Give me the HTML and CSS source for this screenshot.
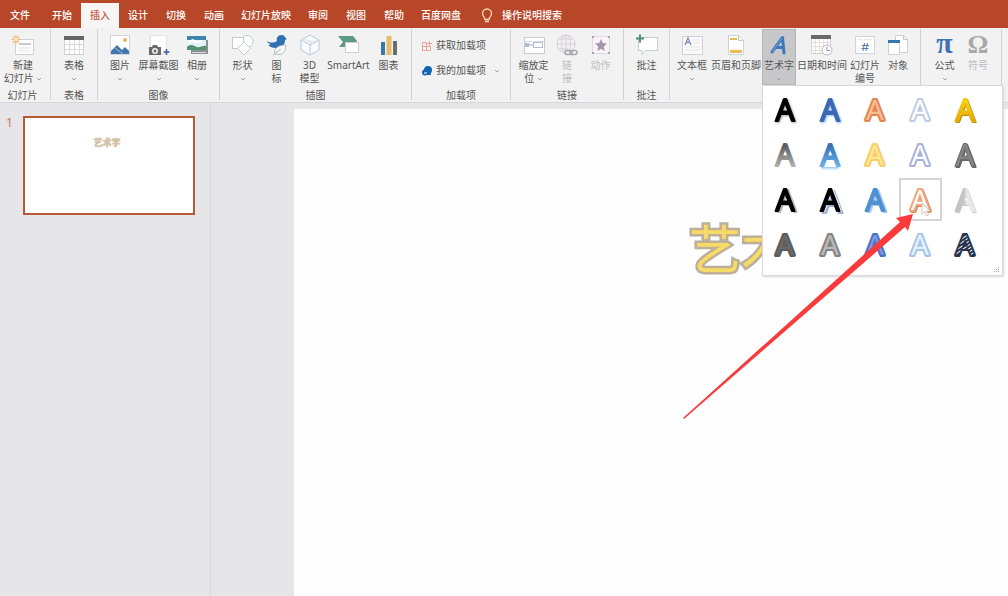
FILE: index.html
```html
<!DOCTYPE html>
<html lang="zh-CN">
<head>
<meta charset="utf-8">
<title>演示文稿</title>
<link rel="stylesheet" href="styles.css">
</head>
<body>
<svg class="defs" aria-hidden="true">
  <defs>
    <linearGradient id="grey" x2="0" y2="1"><stop offset=".3" stop-color="#5f5f5f"/><stop offset=".8" stop-color="#b5b5b5"/></linearGradient>
    <linearGradient id="blue" x2="0" y2="1"><stop offset=".3" stop-color="#3974ba"/><stop offset=".8" stop-color="#6fb1ea"/></linearGradient>
    <linearGradient id="gold" x2="0" y2="1"><stop offset=".3" stop-color="#f6cf10"/><stop offset=".8" stop-color="#e3a90c"/></linearGradient>
    <linearGradient id="silver"><stop offset=".4" stop-color="#c4c4c4"/><stop offset=".6" stop-color="#e9e9e9"/></linearGradient>
    <linearGradient id="fade" x2="0" y2="1"><stop offset="0" stop-color="#8fc3ea"/><stop offset=".8" stop-color="#fff" stop-opacity="0"/></linearGradient>
    <pattern id="hatch" width="3" height="3" patternUnits="userSpaceOnUse" patternTransform="rotate(-35)"><path d="M0 0h3v3H0z" fill="#fff"/><path d="M0 0h3v2H0z" fill="#26344f"/></pattern>
  </defs>
</svg>
<div class="app">
  <nav class="tabs">
    <button class="tab file">文件</button>
    <button class="tab">开始</button>
    <button class="tab active">插入</button>
    <button class="tab">设计</button>
    <button class="tab">切换</button>
    <button class="tab">动画</button>
    <button class="tab wide">幻灯片放映</button>
    <button class="tab">审阅</button>
    <button class="tab">视图</button>
    <button class="tab">帮助</button>
    <button class="tab wide">百度网盘</button>
    <button class="tell">
      <svg width="12" height="16" viewBox="0 0 12 16" fill="none" stroke="#ffd9b8" stroke-width="1.3"><path d="M4 11.500C4 9 1.500 8.500 1.500 5.500a4.500 4.500 0 0 1 9 0C10.500 8.500 8 9 8 11.500zM4 13.500h4"/></svg>
      操作说明搜索
    </button>
  </nav>

  <div class="ribbon">
    <section class="group g-slide">
      <div class="tools">
        <button class="tool w42">
          <svg class="icon" viewBox="0 0 24 22"><rect x="4.500" y="5.500" width="18" height="15" fill="#fff" stroke="#cfcfd4"/><path d="M8 9h12v2H8z" fill="#c6c8ce"/><path d="M8 14h12M8 17h12" stroke="#dddfe3"/><path d="M5 1v9M0.500 5.500h9M2 2.500l6 6M8 2.500l-6 6" stroke="#f0b56c" stroke-width="1.200"/><circle cx="5" cy="5.500" r="2" fill="#fbe3bd"/></svg>
          <span>新建</span><span>幻灯片 <svg class="caret" viewBox="0 0 6 4"><path d="M1 1l2 2 2-2"/></svg></span>
        </button>
      </div>
      <div class="label">幻灯片</div>
    </section>

    <section class="group g-table">
      <div class="tools">
        <button class="tool w34">
          <svg class="icon" viewBox="0 0 24 22"><rect x="2.500" y="2.500" width="19" height="18" fill="#fff" stroke="#cfcfcf"/><path d="M2 2h20v4H2z" fill="#666"/><path d="M7.500 6v14M12.500 6v14M17.500 6v14M2 10.500h20M2 15.500h20" stroke="#dadada"/></svg>
          <span>表格</span><span><svg class="caret" viewBox="0 0 6 4"><path d="M1 1l2 2 2-2"/></svg></span>
        </button>
      </div>
      <div class="label">表格</div>
    </section>

    <section class="group g-image">
      <div class="tools">
        <button class="tool w36">
          <svg class="icon" viewBox="0 0 24 22"><rect x="2.500" y="1.500" width="19" height="19" fill="#fff" stroke="#d3d5d8"/><path d="M3 20v-3l6-6 5 5 3-3 4 4v3z" fill="#3f76ae"/><path d="M7 14l8 6" stroke="#9fbfdd"/><circle cx="17" cy="6" r="2" fill="#efb35e"/></svg>
          <span>图片</span><span><svg class="caret" viewBox="0 0 6 4"><path d="M1 1l2 2 2-2"/></svg></span>
        </button>
        <button class="tool w41">
          <svg class="icon" viewBox="0 0 24 22"><rect x="3.500" y="1.500" width="16" height="18" fill="#fff" stroke="#e2e2e2"/><path d="M2 13h3l1-2h4l1 2h3v8H2z" fill="#6b6b6b"/><circle cx="8" cy="17" r="3" fill="#f1f1f1"/><circle cx="8" cy="17" r="1.500" fill="#6b6b6b"/><path d="M19.500 15v6M16.500 18h6" stroke="#3c5fa8" stroke-width="1.500"/></svg>
          <span>屏幕截图</span><span><svg class="caret" viewBox="0 0 6 4"><path d="M1 1l2 2 2-2"/></svg></span>
        </button>
        <button class="tool w36">
          <svg class="icon" viewBox="0 0 24 22"><rect x="6" y="6" width="17" height="14" fill="#8b9097"/><path d="M2 2h19v14H2z" fill="#e4f1f6"/><path d="M2 2h19v4H2z" fill="#3d86ab"/><path d="M2 15v-2c4-4 7-1 10 0s6-2 9-1v4H2z" fill="#55906f"/><path d="M3 8l5-2 3 2 6-1" stroke="#fff" stroke-width="2" fill="none"/><path d="M7 18.500h14" stroke="#d9dbe0"/></svg>
          <span>相册</span><span><svg class="caret" viewBox="0 0 6 4"><path d="M1 1l2 2 2-2"/></svg></span>
        </button>
      </div>
      <div class="label">图像</div>
    </section>

    <section class="group g-illus">
      <div class="tools">
        <button class="tool w34">
          <svg class="icon" viewBox="0 0 24 22" fill="#fff" stroke="#c7cad6"><circle cx="16" cy="7.500" r="6"/><rect x="1.500" y="3.500" width="11" height="11"/><path d="M13 8l6.500 6.500L13 21l-6.500-6.500z"/></svg>
          <span>形状</span><span><svg class="caret" viewBox="0 0 6 4"><path d="M1 1l2 2 2-2"/></svg></span>
        </button>
        <button class="tool w34">
          <svg class="icon" viewBox="0 0 24 22"><path d="M2 7c3 2 7 2 10 0-1-3 1-6 4.500-6 2 0 3.500 1 4 3l1.500 1-2 1c0 4-2 6-5 7-4 2-9 1-12-2 1 0 2 0 2-1-2-1-3-2-3-3z" fill="#2f6fb3"/><path d="M10 20c-2-5 3-9 11-9 0 7-4 11-10 9zM16 15l-8 6" fill="#f7f7f7" stroke="#b4b9be"/></svg>
          <span>图</span><span>标</span>
        </button>
        <button class="tool w32">
          <svg class="icon" viewBox="0 0 24 22" fill="#fbfdff" stroke="#b3c8e3" stroke-linejoin="round"><path d="M12 1l9 5v10l-9 5-9-5V6zM3 6l9 5 9-5M12 11v10"/><path d="M6 4.500l9 5" stroke="#d4e1f1"/></svg>
          <span>3D</span><span>模型</span>
        </button>
        <button class="tool w46">
          <svg class="icon" viewBox="0 0 24 22"><path d="M1 2h15l4 5-2 3H9v3H2l4-5z" fill="#5c9a82"/><rect x="8.500" y="8.500" width="13" height="10" fill="#fff" stroke="#cdcdd3"/></svg>
          <span>SmartArt</span>
        </button>
        <button class="tool w34">
          <svg class="icon" viewBox="0 0 24 22"><path d="M4 8h4v13H4z" fill="#3a75b0"/><path d="M9.500 2h5v19h-5z" fill="#e9bd68"/><path d="M16 7h4v14h-4z" fill="#6a7072"/></svg>
          <span>图表</span>
        </button>
      </div>
      <div class="label">插图</div>
    </section>

    <section class="group g-addin">
      <div class="rows">
        <button class="row">
          <svg width="10" height="10" viewBox="0 0 10 10" fill="none" stroke="#eda29c"><path d="M.5 1.500h4v8h-4zM.5 5.500h8v4h-8M7.500 0v5M5 2.500h5"/></svg>
          获取加载项
        </button>
        <button class="row">
          <svg width="10" height="10" viewBox="0 0 10 10" fill="#1464b4"><circle cx="6" cy="4" r="4"/><circle cx="3" cy="6.500" r="3"/><path d="M4 9l4-4 1 4z"/><path d="M2 7h3" stroke="#fff"/></svg>
          <span class="grow">我的加载项</span>
          <svg class="caret" viewBox="0 0 6 4"><path d="M1 1l2 2 2-2"/></svg>
        </button>
      </div>
      <div class="label">加载项</div>
    </section>

    <section class="group g-link">
      <div class="tools">
        <button class="tool w34">
          <svg class="icon" viewBox="0 0 24 22"><rect x="2.500" y="3.500" width="20" height="16" fill="#fff" stroke="#c9c9d2"/><path d="M2 7.500h20" stroke="#dddbe8"/><rect x="11.500" y="8.500" width="9" height="5" fill="#fff" stroke="#b4bdd6"/><path d="M3 9h4v4H3z" fill="#b1bbdc"/><path d="M6 11h5" stroke="#9dabd3"/></svg>
          <span>缩放定</span><span>位 <svg class="caret" viewBox="0 0 6 4"><path d="M1 1l2 2 2-2"/></svg></span>
        </button>
        <button class="tool w33" disabled>
          <svg class="icon" viewBox="0 0 24 22" fill="none" stroke="#d6ced9"><circle cx="11" cy="10" r="9"/><ellipse cx="11" cy="10" rx="4.500" ry="9"/><path d="M2 10h18M4 5h14M4 15h9M11 1v18"/><g stroke="#a5a5aa" stroke-width="1.500"><rect x="10" y="16.500" width="7" height="4" rx="2" fill="#f2f2f2"/><rect x="15" y="16.500" width="7" height="4" rx="2"/></g></svg>
          <span>链</span><span>接</span>
        </button>
        <button class="tool w34" disabled>
          <svg class="icon" viewBox="0 0 24 22"><rect x="3.500" y="2.500" width="17" height="17" fill="#f8f4f8" stroke="#e0d8e2"/><path d="M12 5l1.800 4 4.200.5-3.200 3 .9 4.500-3.700-2.300L8.300 17l.9-4.500-3.200-3 4.200-.5z" fill="#a596ac"/><path d="M3 2h2v2H3zM19 2h2v2h-2zM3 18h2v2H3zM19 18h2v2h-2z" fill="#a99fb0"/></svg>
          <span>动作</span>
        </button>
      </div>
      <div class="label">链接</div>
    </section>

    <section class="group g-note">
      <div class="tools">
        <button class="tool w34">
          <svg class="icon" viewBox="0 0 24 22"><path d="M3.500 3.500h19v13H11l-4 4v-4H3.500z" fill="#fff" stroke="#c8cccb"/><path d="M5 .5v8M1 4.500h8" stroke="#4f917a" stroke-width="2"/></svg>
          <span>批注</span>
        </button>
      </div>
      <div class="label">批注</div>
    </section>

    <section class="group g-text">
      <div class="tools">
        <button class="tool w36">
          <svg class="icon" viewBox="0 0 24 22"><rect x="2.500" y="2.500" width="20" height="18" fill="#fafafc" stroke="#cfcfd4"/><path d="M5 11l3-7 3 7M6 8.500h4" fill="none" stroke="#7d8dc2" stroke-width="1.300"/><path d="M13 6h7M13 9h7M5 13h15M5 16h15" stroke="#e6e6ec"/></svg>
          <span>文本框</span><span><svg class="caret" viewBox="0 0 6 4"><path d="M1 1l2 2 2-2"/></svg></span>
        </button>
        <button class="tool w52">
          <svg class="icon" viewBox="0 0 24 22"><path d="M4.500 1.500h10l5 5v14h-15z" fill="#fff" stroke="#d2d2d2"/><path d="M14.500 1.500v5h5" fill="none" stroke="#c7c7c7"/><path d="M6 4h7v2H6zM6 16h12v3H6z" fill="#e7bd5c"/></svg>
          <span>页眉和页脚</span>
        </button>
        <div class="menu-anchor">
          <button class="tool w34 open" aria-expanded="true">
            <svg class="icon" viewBox="0 0 24 22"><path d="M5 18L15.500 3.500 17 19M8 13.500h8.500" fill="none" stroke="#3c77bd" stroke-width="3" stroke-linejoin="round" stroke-linecap="round"/><path d="M5.500 17.500L15 4" stroke="#7aa6dc"/></svg>
            <span>艺术字</span><span><svg class="caret" viewBox="0 0 6 4"><path d="M1 1l2 2 2-2"/></svg></span>
          </button>
          <div class="gallery">
            <button class="art"><svg class="a1"><text x="19" y="31">A</text></svg></button>
            <button class="art"><svg class="a2"><text x="19" y="31">A</text></svg></button>
            <button class="art thick"><svg class="a3"><text x="19" y="30">A</text></svg></button>
            <button class="art thick"><svg class="a4"><text x="19" y="30">A</text></svg></button>
            <button class="art"><svg class="a5"><text x="19" y="31">A</text></svg></button>

            <button class="art"><svg class="a6"><text x="19" y="31">A</text></svg></button>
            <button class="art"><svg class="a7"><path d="M10 32h18l-2 6H12z" fill="url(#fade)"/><text x="19" y="31">A</text></svg></button>
            <button class="art thick"><svg class="a8"><text x="19" y="30">A</text></svg></button>
            <button class="art thick"><svg class="a9"><text x="19" y="30">A</text></svg></button>
            <button class="art"><svg class="a10"><text x="19" y="31">A</text></svg></button>

            <button class="art"><svg class="a11"><text x="19" y="31">A</text></svg></button>
            <button class="art"><svg class="a12"><text x="19" y="31">A</text></svg></button>
            <button class="art"><svg class="a13"><text x="19" y="31">A</text></svg></button>
            <button class="art thick chosen"><svg class="a14"><text x="19" y="30">A</text></svg></button>
            <button class="art"><svg class="a15"><text x="19" y="31">A</text></svg></button>

            <button class="art thick"><svg class="a16"><text x="19" y="30">A</text></svg></button>
            <button class="art thick"><svg class="a17"><text x="19" y="30">A</text></svg></button>
            <button class="art thick"><svg class="a18"><text x="19" y="30">A</text></svg></button>
            <button class="art thick"><svg class="a19"><text x="19" y="30">A</text></svg></button>
            <button class="art thick"><svg class="a20"><text x="19" y="30">A</text></svg></button>
            <svg class="pointer" viewBox="0 0 10 15"><path d="M1 1v11l2.500-2.500L5.500 14l2-1-2-4H9z" fill="#fff" stroke="#cfc4c2"/></svg>
            <svg class="grip" viewBox="0 0 6 6" fill="#aaa"><path d="M4 0h1v1H4zM2 2h1v1H2zM4 2h1v1H4zM0 4h1v1H0zM2 4h1v1H2zM4 4h1v1H4z"/></svg>
          </div>
        </div>
        <button class="tool w52">
          <svg class="icon" viewBox="0 0 24 22"><rect x="1.500" y="2.500" width="19" height="17" fill="#fff" stroke="#d4cfcf"/><path d="M1 1h20v4H1z" fill="#696969"/><path d="M5.500 5v14M9.500 5v14M13.500 5v14M17.500 5v14M1 8.500h20M1 12.500h20M1 16.500h20" stroke="#eaddda"/><circle cx="17" cy="16" r="5" fill="#fff" stroke="#b3bfce"/><path d="M17 13v3.500h3" fill="none" stroke="#8c9bb0"/></svg>
          <span>日期和时间</span>
        </button>
        <button class="tool w34">
          <svg class="icon" viewBox="0 0 24 22"><rect x="2.500" y="2.500" width="19" height="17" fill="#fff" stroke="#d1d3da"/><path d="M5 5.500h14" stroke="#e0e0e5" stroke-dasharray="2 1"/><path d="M11.500 9L10 17M14.500 9L13 17M9 11.500h7M8.500 14.500h7" stroke="#5b76ad"/></svg>
          <span>幻灯片</span><span>编号</span>
        </button>
        <button class="tool w32">
          <svg class="icon" viewBox="0 0 24 22"><path d="M9.500 1.500h8l4 4v13h-12z" fill="#fff" stroke="#d0d0d0"/><path d="M17.500 1.500v4h4" fill="none" stroke="#c5c5c5"/><rect x="2.500" y="6.500" width="11" height="14" fill="#fff" stroke="#cdd2d8"/><path d="M2 6h12v3H2z" fill="#3377ac"/></svg>
          <span>对象</span>
        </button>
      </div>
    </section>

    <section class="group g-symbol">
      <div class="tools">
        <button class="tool w34">
          <span class="glyph pi">π</span>
          <span>公式</span><span><svg class="caret" viewBox="0 0 6 4"><path d="M1 1l2 2 2-2"/></svg></span>
        </button>
        <button class="tool w33" disabled>
          <span class="glyph">Ω</span>
          <span>符号</span>
        </button>
      </div>
    </section>
  </div>

  <main class="work">
    <aside class="thumbs">
      <span class="num">1</span>
      <button class="thumb">艺术字</button>
    </aside>
    <div class="stage">
      <div class="slide"><div class="title">艺术字</div></div>
    </div>
  </main>

  <svg class="arrow" viewBox="0 0 232 206"><path d="M0 204L217 8l-4-4 17-4-5 17-3-4L1 205z" fill="#fb3b3b"/></svg>
</div>
</body>
</html>
```

FILE: styles.css
```css
* { box-sizing: border-box; }

body {
  margin: 0;
  font-family: "Noto Sans", "Noto Sans CJK SC", sans-serif;
  font-size: 10px;
  line-height: 13px;
  color: #555;
}

button {
  margin: 0;
  padding: 0;
  border: 0;
  background: none;
  font: inherit;
  color: inherit;
  white-space: nowrap;
}

.defs { position: absolute; width: 0; height: 0; }

.app {
  position: relative;
  display: flex;
  flex-direction: column;
  min-height: 100vh;
  overflow: hidden;
}

/* Tab strip */
.tabs {
  display: flex;
  align-items: flex-end;
  height: 28px;
  background: #b8472a;
  color: #fff;
}
.tab { height: 25px; padding: 0 9px; }
.tab.file { padding: 0 13px 0 10px; }
.tab.wide { padding: 0 8px; }
.tab.active { background: #f8f6f5; color: #c4593f; }
.tell {
  display: flex;
  align-items: center;
  gap: 9px;
  height: 25px;
  margin-left: 12px;
}
.tab, .tell { font-weight: 500; }

/* Ribbon */
.ribbon {
  display: flex;
  height: 75px;
  padding: 1px 0 2px;
  background: #f2f2f2;
  border-bottom: 1px solid #d6d6d8;
}
.group {
  display: flex;
  flex-direction: column;
  flex: none;
  border-right: 1px solid #d2d2d2;
}
.g-slide { width: 51px; }
.g-table { width: 47px; }
.g-image { width: 122px; }
.g-illus { width: 192px; }
.g-addin { width: 99px; }
.g-link { width: 113px; }
.g-note { width: 46px; }
.g-text { width: 251px; }
.g-symbol { width: 81px; }

.tools {
  display: flex;
  justify-content: center;
  height: 56px;
}
.g-slide .tools { justify-content: flex-start; padding-left: 2px; }
.g-text .tools { justify-content: flex-start; padding-left: 4px; }
.label { margin-top: 4px; text-align: center; }
.g-slide .label { padding-right: 5px; }

.tool {
  display: flex;
  flex-direction: column;
  align-items: center;
  height: 56px;
  padding-top: 5px;
}
.tool:disabled { color: #bdbdbd; }
.tool.open { background: #c8c8cb; box-shadow: inset 0 0 0 1px #b6b6ba; }
.w32 { width: 32px; }
.w33 { width: 33px; }
.w34 { width: 34px; }
.w36 { width: 36px; }
.w41 { width: 41px; }
.w42 { width: 42px; }
.w46 { width: 46px; }
.w52 { width: 52px; }

.icon { flex: none; width: 24px; height: 22px; margin-bottom: 3px; }
.caret {
  width: 6px;
  height: 4px;
  vertical-align: middle;
  fill: none;
  stroke: #a0a0a0;
}
.glyph {
  height: 22px;
  margin-bottom: 3px;
  font: bold 26px/22px "Liberation Serif", serif;
  color: #a8a8a8;
}
.glyph.pi { font-size: 30px; line-height: 18px; color: #3f72b2; }

.rows {
  display: flex;
  flex: none;
  flex-direction: column;
  gap: 12px;
  height: 56px;
  padding: 10px 10px 0;
}
.row { display: flex; align-items: center; gap: 4px; height: 13px; }
.row .grow { flex: 1; text-align: left; }

/* WordArt gallery */
.menu-anchor { position: relative; }
.gallery {
  position: absolute;
  z-index: 2;
  top: 100%;
  left: 0;
  display: grid;
  grid-template-columns: repeat(5, 45px);
  grid-auto-rows: 45px;
  width: 241px;
  padding: 1px 0 8px;
  background: #fff;
  border: 1px solid #d9d9db;
  box-shadow: 1px 1px 2px #d8d8d8;
}
.art {
  margin: 1px;
  border: 2px solid transparent;
  font: 30px/38px "Noto Sans", sans-serif;
}
.art svg { display: block; width: 100%; height: 100%; overflow: visible; }
.art text {
  text-anchor: middle;
  paint-order: stroke fill;
  stroke-width: 2;
  stroke-linejoin: round;
}
.thick { font-size: 28px; }
.thick text { stroke-width: 4; }
.chosen { border-color: #d9d3d5; }

.a1 { fill: #000; stroke: #000; filter: drop-shadow(1px 1px 1px #aaa); }
.a2 { fill: #3b67b4; stroke: #3f6cba; filter: drop-shadow(1px 1px 1px #9cc0ee); }
.a3 { fill: #f8bd96; stroke: #e5854f; }
.a4 { fill: #fff; stroke: #bccbe2; }
.a5 { fill: url(#gold); stroke: url(#gold); filter: drop-shadow(1px 1px 0 #c08d10); }
.a6 { fill: url(#grey); stroke: url(#grey); }
.a7 { fill: url(#blue); stroke: url(#blue); }
.a7 path { stroke: none; }
.a8 { fill: #ffe699; stroke: #f6cd66; }
.a9 { fill: #fff; stroke: #a3b1dc; }
.a10 { fill: #858585; stroke: #6a6a6a; filter: drop-shadow(1px 1px 0 #666); }
.a11 { fill: #000; stroke: #000; filter: drop-shadow(2px 1px 0 #b5b5b5); }
.a12 { fill: #000; stroke: #000; filter: drop-shadow(1px 0 0 #fff) drop-shadow(2px 2px 0 #9fb4d8); }
.a13 { fill: #4e91d2; stroke: #4e91d2; filter: drop-shadow(2px 1px 0 #a9caeb); }
.a14 { fill: #fff; stroke: #f0a47a; filter: drop-shadow(1px 1px 0 #dd8449); }
.a15 { fill: url(#silver); stroke: url(#silver); filter: drop-shadow(1px 1px 0 #c8c8c8); }
.a16 { fill: #6a6a6a; stroke: #5b5b5b; }
.a17 { fill: #b8b8b8; stroke: #838383; }
.a18 { fill: #7c9ae5; stroke: #4a70c4; }
.a19 { fill: #e6f1fd; stroke: #a5c4e9; }
.a20 { fill: url(#hatch); stroke: #26344f; }
.pointer { position: absolute; left: 158px; top: 116px; width: 10px; height: 15px; }
.grip { position: absolute; right: 2px; bottom: 2px; width: 6px; height: 6px; }

/* Workspace */
.work { display: flex; flex: 1; background: #e6e6e8; }
.thumbs {
  display: flex;
  align-items: flex-start;
  gap: 10px;
  width: 211px;
  padding: 13px 15px 0 6px;
  border-right: 1px solid #d7d7d9;
}
.num { width: 7px; font-size: 12px; color: #d4705c; }
.thumb {
  flex: 1;
  height: 99px;
  padding: 0 4px 46px 0;
  border: 2px solid #b85a36;
  background: #fff;
  font-size: 9px;
  font-weight: 900;
  color: #d3c4a8;
  text-shadow: 0 0 1px #c8ad88;
}
.stage { display: flex; flex: 1; padding: 6px 0 0 83px; }
.slide { flex: 1; padding: 102px 0 0 395px; background: #fefefe; }
.title {
  font-size: 52px;
  line-height: 76px;
  font-weight: 400;
  white-space: nowrap;
  color: #f3dc68;
  paint-order: stroke fill;
  -webkit-text-stroke: 5px #b3b3a4;
  text-shadow: 0 0 3px #f0a070;
}

/* Callout arrow */
.arrow {
  position: absolute;
  z-index: 3;
  left: 683px;
  top: 214px;
  width: 232px;
  height: 206px;
  pointer-events: none;
}
```
